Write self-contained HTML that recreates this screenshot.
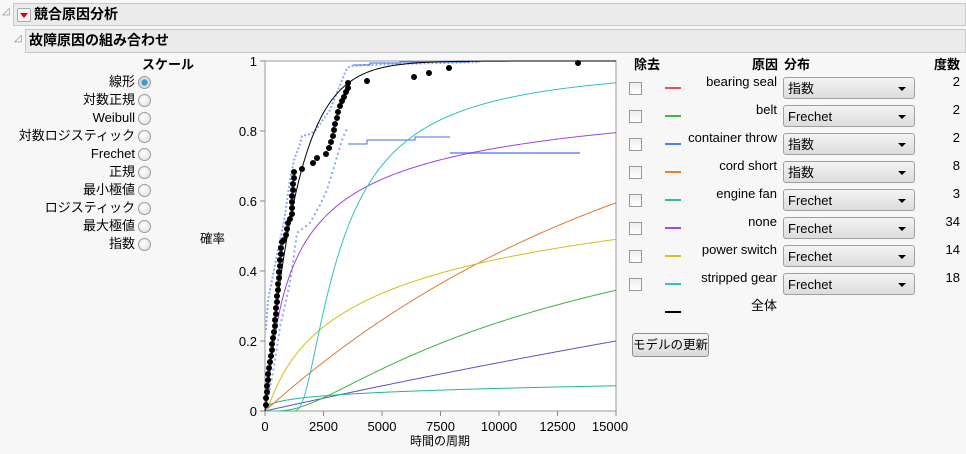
<!DOCTYPE html>
<html><head><meta charset="utf-8"><style>
body{margin:0;width:966px;height:454px;background:#f7f7f7;font-family:"Liberation Sans","Noto Sans CJK JP",sans-serif;position:relative;overflow:hidden;font-size:12px;color:#000}
.a{position:absolute;white-space:nowrap}
.hdr{position:absolute;background:#ebebeb;border:1px solid #c8c8c8;font-weight:bold;font-size:14px;line-height:21px}
.rad{position:absolute;width:11px;height:11px;border-radius:50%;border:1px solid #9a9a9a;background:radial-gradient(circle at 40% 40%,#fff,#ddd)}
.lbl{position:absolute;right:831px;text-align:right;font-size:13px;line-height:16px;white-space:nowrap}
.cb{position:absolute;left:629px;width:11px;height:11px;border:1px solid #999;background:linear-gradient(#eee,#fff)}
.ln{position:absolute;left:665px;width:16px;height:2px}
.cn{position:absolute;right:189px;font-size:13px;line-height:16px;text-align:right;white-space:nowrap}
.dd{position:absolute;left:783px;width:132px;height:22px;border:1px solid #a0a0a0;border-radius:3px;background:linear-gradient(#f4f4f4,#dcdcdc);font-size:13px;line-height:22px;padding-left:4px;box-sizing:border-box}
.dd:after{content:"";position:absolute;right:8px;top:9px;border-left:4px solid transparent;border-right:4px solid transparent;border-top:4px solid #000}
.ct{position:absolute;right:6px;font-size:13px;line-height:16px}
</style></head><body>
<div class="a" style="left:2px;top:6px;color:#888;font-size:10px">◿</div>
<div class="hdr" style="left:13px;top:3px;width:951px;height:21px">
<span style="position:absolute;left:3px;top:4px;width:12px;height:12px;border:1px solid #aaa;background:#f4f4f4;border-radius:2px"><span style="position:absolute;left:2px;top:4px;border-left:4px solid transparent;border-right:4px solid transparent;border-top:5px solid #d00"></span></span>
<span style="position:absolute;left:20px;top:0">競合原因分析</span></div>
<div class="a" style="left:14px;top:33px;color:#888;font-size:10px">◿</div>
<div class="hdr" style="left:25px;top:29px;width:939px;height:22px"><span style="position:absolute;left:3px;top:0">故障原因の組み合わせ</span></div>

<div class="a" style="left:142px;top:54px;font-weight:bold;font-size:13px">スケール</div>
<div class="lbl" style="top:74px">線形</div><div class="lbl" style="top:92px">対数正規</div><div class="lbl" style="top:110px">Weibull</div><div class="lbl" style="top:128px">対数ロジスティック</div><div class="lbl" style="top:146px">Frechet</div><div class="lbl" style="top:164px">正規</div><div class="lbl" style="top:182px">最小極値</div><div class="lbl" style="top:200px">ロジスティック</div><div class="lbl" style="top:218px">最大極値</div><div class="lbl" style="top:236px">指数</div>
<div class="rad" style="left:138px;top:76px;background:radial-gradient(circle,#3a9bd0 35%,#ddd 45%)"></div>
<div class="rad" style="left:138px;top:94px"></div><div class="rad" style="left:138px;top:112px"></div><div class="rad" style="left:138px;top:130px"></div><div class="rad" style="left:138px;top:148px"></div><div class="rad" style="left:138px;top:166px"></div><div class="rad" style="left:138px;top:184px"></div><div class="rad" style="left:138px;top:202px"></div><div class="rad" style="left:138px;top:220px"></div><div class="rad" style="left:138px;top:238px"></div>
<div class="a" style="left:200px;top:228px;font-size:12.5px">確率</div>

<svg id="sv" class="a" style="left:0;top:0" width="966" height="454" viewBox="0 0 966 454" font-family="Liberation Sans, sans-serif" font-size="13">
<rect x="265" y="61" width="351" height="350" fill="#fff" stroke="#999"/>
<g stroke="#888"><line x1="260" y1="61" x2="265" y2="61"/><line x1="260" y1="131" x2="265" y2="131"/><line x1="260" y1="201" x2="265" y2="201"/><line x1="260" y1="271" x2="265" y2="271"/><line x1="260" y1="341" x2="265" y2="341"/><line x1="260" y1="411" x2="265" y2="411"/>
<line x1="265" y1="411" x2="265" y2="416"/><line x1="323.5" y1="411" x2="323.5" y2="416"/><line x1="382" y1="411" x2="382" y2="416"/><line x1="440.5" y1="411" x2="440.5" y2="416"/><line x1="499" y1="411" x2="499" y2="416"/><line x1="557.5" y1="411" x2="557.5" y2="416"/><line x1="616" y1="411" x2="616" y2="416"/></g>
<g text-anchor="end"><text x="257" y="66">1</text><text x="257" y="136">0.8</text><text x="257" y="206">0.6</text><text x="257" y="276">0.4</text><text x="257" y="346">0.2</text><text x="257" y="416">0</text></g>
<g text-anchor="middle"><text x="265" y="431">0</text><text x="323.5" y="431">2500</text><text x="382" y="431">5000</text><text x="440.5" y="431">7500</text><text x="499" y="431">10000</text><text x="557.5" y="431">12500</text><text x="610" y="431">15000</text>
<text x="440" y="445" font-family="Liberation Sans, Noto Sans CJK JP, sans-serif" font-size="12">時間の周期</text></g>
<g fill="none" stroke-width="1">
<polyline stroke="#8aa8f8" stroke-dasharray="2 2" stroke-width="2" points="266,330 268,300 272,280 278,250 284,222 290,180 294,160 300,144 302,136 310,134 316,130 320,124 330,110 336,95 342,80 346,70 350,66 365,65 400,64 480,62"/>
<polyline stroke="#8aa8f8" stroke-dasharray="2 3" stroke-width="2" points="268,400 275,360 280,327 290,283 297,233 310,223 320,205 327,190 337,157 343,137 348,127"/>
<polyline stroke="#3a70f0" points="353,65 370,65 370,63 400,63 400,62 470,62"/>
<polyline stroke="#3a70f0" points="348,144 367,144 367,140 415,140 415,137 450,137"/>
<line x1="450" y1="153" x2="580" y2="153" stroke="#8aa8f8" stroke-width="2"/>
<g id="curves"></g>
</g>
<g fill="#000">
<circle cx="266" cy="405" r="3"/><circle cx="266" cy="398" r="3"/><circle cx="267" cy="392" r="3"/><circle cx="267" cy="386" r="3"/><circle cx="268" cy="380" r="3"/><circle cx="268" cy="374" r="3"/><circle cx="269" cy="368" r="3"/><circle cx="270" cy="362" r="3"/><circle cx="271" cy="356" r="3"/><circle cx="272" cy="350" r="3"/><circle cx="272" cy="344" r="3"/><circle cx="273" cy="338" r="3"/><circle cx="274" cy="332" r="3"/><circle cx="275" cy="326" r="3"/><circle cx="275" cy="320" r="3"/><circle cx="276" cy="314" r="3"/><circle cx="276" cy="308" r="3"/><circle cx="277" cy="302" r="3"/><circle cx="277" cy="296" r="3"/><circle cx="278" cy="290" r="3"/><circle cx="278" cy="284" r="3"/><circle cx="279" cy="278" r="3"/><circle cx="279" cy="272" r="3"/><circle cx="280" cy="266" r="3"/><circle cx="280" cy="260" r="3"/><circle cx="281" cy="254" r="3"/><circle cx="281" cy="248" r="3"/><circle cx="282" cy="242" r="3"/><circle cx="284" cy="240" r="3"/><circle cx="286" cy="235" r="3"/><circle cx="287" cy="229" r="3"/><circle cx="288" cy="223" r="3"/><circle cx="290" cy="219" r="3"/><circle cx="292" cy="214" r="3"/><circle cx="292" cy="208" r="3"/><circle cx="292" cy="202" r="3"/><circle cx="292" cy="196" r="3"/><circle cx="293" cy="190" r="3"/><circle cx="293" cy="184" r="3"/><circle cx="294" cy="178" r="3"/><circle cx="294" cy="172" r="3"/><circle cx="302" cy="169" r="3"/><circle cx="313" cy="163" r="3"/><circle cx="317" cy="158" r="3"/><circle cx="326" cy="154" r="3"/><circle cx="329" cy="148" r="3"/><circle cx="331" cy="142" r="3"/><circle cx="333" cy="136" r="3"/><circle cx="334" cy="130" r="3"/><circle cx="335" cy="124" r="3"/><circle cx="337" cy="118" r="3"/><circle cx="338" cy="112" r="3"/><circle cx="340" cy="106" r="3"/><circle cx="342" cy="101" r="3"/><circle cx="344" cy="97" r="3"/><circle cx="346" cy="92" r="3"/><circle cx="348" cy="88" r="3"/><circle cx="348" cy="83" r="3"/><circle cx="367" cy="81" r="3"/><circle cx="414" cy="77" r="3"/><circle cx="429" cy="73" r="3"/><circle cx="449" cy="68" r="3"/><circle cx="578" cy="63" r="3"/>
</g>
</svg>
<script>
(function(){
var fr=function(s,a,loc){return function(t){t-=loc||0;return t<=0?0:Math.exp(-Math.pow(s/t,a));};};
var ex=function(th){return function(t){return 1-Math.exp(-t/th);};};
var C=[
["#5555c8",ex(67200)],
["#20b890",fr(2.55e8,0.0993)],
["#40b040",fr(16560,0.627)],
["#e07830",ex(16600)],
["#d0c020",fr(6250,0.387)],
["#a040e0",fr(954,0.535)],
["#30c0c0",fr(2000,1.4,800)],
["#000",function(t){return 1-Math.exp(-Math.pow(t/1350,1.05));}]
];
var g=document.getElementById('curves'),h='';
C.forEach(function(c){var pts=[];for(var i=0;i<=300;i++){var t=15000*Math.pow(i/300,1.6);pts.push((265+t*351/15000).toFixed(2)+','+(411-350*c[1](t)).toFixed(2));}
h+='<polyline fill="none" stroke="'+c[0]+'" points="'+pts.join(' ')+'"/>';});
g.innerHTML=h;
})();
</script>

<div class="a" style="left:634px;top:54px;font-weight:bold;font-size:13px">除去</div>
<div class="a" style="left:752px;top:54px;font-weight:bold;font-size:13px">原因</div>
<div class="a" style="left:784px;top:54px;font-weight:bold;font-size:13px">分布</div>
<div class="a" style="left:934px;top:54px;font-weight:bold;font-size:13px">度数</div>

<div class="cb" style="top:82px"></div><div class="ln" style="top:87px;background:#e85060"></div><div class="cn" style="top:74px">bearing seal</div><div class="dd" style="top:77px">指数</div><div class="ct" style="top:74px">2</div>
<div class="cb" style="top:110px"></div><div class="ln" style="top:115px;background:#40b840"></div><div class="cn" style="top:102px">belt</div><div class="dd" style="top:105px">Frechet</div><div class="ct" style="top:102px">2</div>
<div class="cb" style="top:138px"></div><div class="ln" style="top:143px;background:#4a80f0"></div><div class="cn" style="top:130px">container throw</div><div class="dd" style="top:133px">指数</div><div class="ct" style="top:130px">2</div>
<div class="cb" style="top:166px"></div><div class="ln" style="top:171px;background:#e88030"></div><div class="cn" style="top:158px">cord short</div><div class="dd" style="top:161px">指数</div><div class="ct" style="top:158px">8</div>
<div class="cb" style="top:194px"></div><div class="ln" style="top:199px;background:#30c090"></div><div class="cn" style="top:186px">engine fan</div><div class="dd" style="top:189px">Frechet</div><div class="ct" style="top:186px">3</div>
<div class="cb" style="top:222px"></div><div class="ln" style="top:227px;background:#b040e0"></div><div class="cn" style="top:214px">none</div><div class="dd" style="top:217px">Frechet</div><div class="ct" style="top:214px">34</div>
<div class="cb" style="top:250px"></div><div class="ln" style="top:255px;background:#d0c020"></div><div class="cn" style="top:242px">power switch</div><div class="dd" style="top:245px">Frechet</div><div class="ct" style="top:242px">14</div>
<div class="cb" style="top:278px"></div><div class="ln" style="top:283px;background:#30c0c0"></div><div class="cn" style="top:270px">stripped gear</div><div class="dd" style="top:273px">Frechet</div><div class="ct" style="top:270px">18</div>
<div class="ln" style="top:311px;background:#000"></div><div class="cn" style="top:298px">全体</div>
<div class="a" style="left:632px;top:333px;width:75px;height:22px;border:1px solid #909090;border-radius:3px;background:linear-gradient(#f6f6f6,#dadada);font-size:12.5px;line-height:22px;text-align:center">モデルの更新</div>
</body></html>
